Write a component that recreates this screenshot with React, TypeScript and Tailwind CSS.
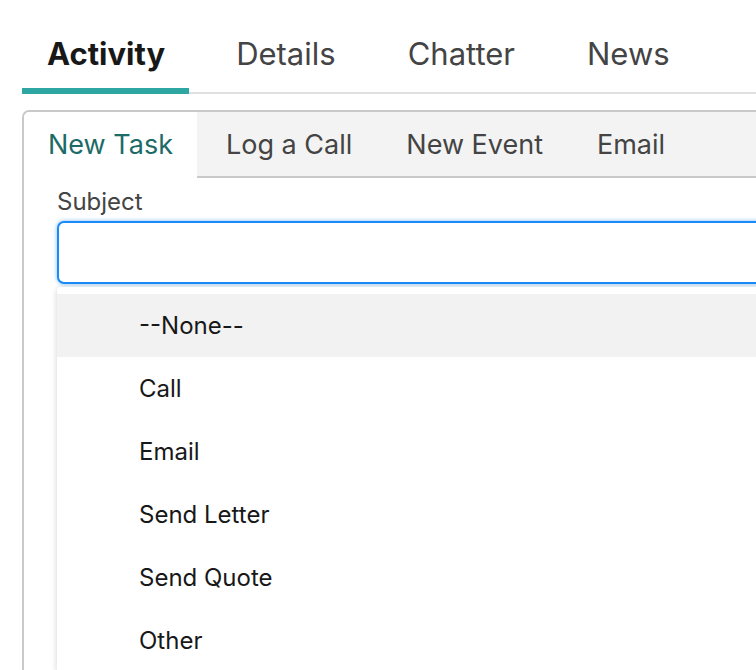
import { useState } from "react";

const MAIN_TABS = ["Activity", "Details", "Chatter", "News"];
const ACTION_TABS = ["New Task", "Log a Call", "New Event", "Email"];
const SUBJECT_OPTIONS = ["--None--", "Call", "Email", "Send Letter", "Send Quote", "Other"];

export default function App() {
  const [mainTab, setMainTab] = useState("Activity");
  const [actionTab, setActionTab] = useState("New Task");
  const [hovered, setHovered] = useState("--None--");

  return (
    <div className="h-[670px] w-[756px] overflow-hidden bg-white font-['Inter','Liberation_Sans',sans-serif]">
      <div className="pl-[22px] pt-[33px]">
        {/* record tabs */}
        <div className="flex gap-[22px] border-b-2 border-[#e0e0e0]">
          {MAIN_TABS.map((t) => {
            const active = t === mainTab;
            return (
              <button
                key={t}
                onClick={() => setMainTab(t)}
                className={
                  active
                    ? "-mb-[2px] border-b-[6px] border-[#2ea6a1] pl-[25px] pr-[24px] pb-[13px] text-[31px] leading-[42px] font-bold text-[#181818]"
                    : "-mb-[2px] border-b-[6px] border-transparent px-[25px] pb-[13px] text-[31px] leading-[42px] text-[#444444]"
                }
              >
                {t}
              </button>
            );
          })}
        </div>

        {/* publisher panel */}
        <div className="mt-[16px] h-[600px] w-[760px] rounded-tl-[7px] border-l-2 border-t-2 border-[#c9c9c9]">
          <div className="flex h-[66px]">
            {ACTION_TABS.map((t, i) => {
              const active = t === actionTab;
              return (
                <button
                  key={t}
                  onClick={() => setActionTab(t)}
                  className={
                    active
                      ? "rounded-tl-[6px] bg-white px-[24px] text-[27px] leading-[34px] text-[#1d6b67]"
                      : i === 1
                        ? "border-b-2 border-[#c9c9c9] bg-[#f3f3f3] pl-[29px] pr-[27px] pt-[2px] text-[27px] leading-[34px] text-[#444444]"
                        : "border-b-2 border-[#c9c9c9] bg-[#f3f3f3] px-[27px] pt-[2px] text-[27px] leading-[34px] text-[#444444]"
                  }
                >
                  {t}
                </button>
              );
            })}
            <div className="flex-1 border-b-2 border-[#c9c9c9] bg-[#f3f3f3]" />
          </div>

          <div className="pl-[33px] pt-[10px]">
            <label className="block text-[24px] leading-[28px] text-[#444444]">Subject</label>
            <div className="mt-[5px] h-[63px] rounded-[7px] border-2 border-[#1b8cf5] bg-white shadow-[0_0_4px_#7fbdf7]" />

            {/* combobox listbox */}
            <div className="mt-[3px] rounded-t-[4px] bg-white pt-[7px] shadow-[0_1px_6px_rgba(0,0,0,0.18)]">
              {SUBJECT_OPTIONS.map((o) => (
                <div
                  key={o}
                  onMouseEnter={() => setHovered(o)}
                  className={
                    o === hovered
                      ? "flex h-[63px] items-center bg-[#f2f2f2] pl-[82px] text-[24px] text-[#181818]"
                      : "flex h-[63px] items-center pl-[82px] text-[24px] text-[#181818]"
                  }
                >
                  {o}
                </div>
              ))}
            </div>
          </div>
        </div>
      </div>
    </div>
  );
}
